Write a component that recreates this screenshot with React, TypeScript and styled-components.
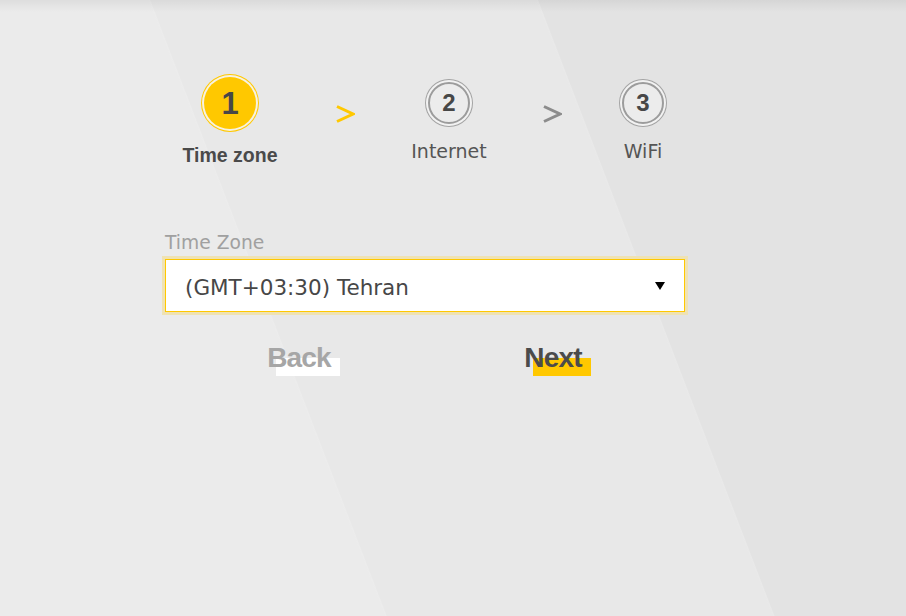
import React from 'react'
import styled, { createGlobalStyle } from 'styled-components'

const GlobalStyle = createGlobalStyle`
  html, body {
    margin: 0;
    padding: 0;
  }
  body {
    font-family: "DejaVu Sans", sans-serif;
    background: #e8e8e8;
  }
`

const YELLOW = '#ffc800'

const Page = styled.div`
  min-height: 100vh;
  box-sizing: border-box;
  padding: 73px 0 0 165px;
  background:
    linear-gradient(180deg, rgba(0, 0, 0, 0.06) 0px, rgba(0, 0, 0, 0) 12px),
    linear-gradient(69deg,
      #ebebeb 0px, #ebebeb 359px, #ececec 360.5px, #e8e8e8 361.5px,
      #e8e8e8 721px, #e9e9e9 722.5px, #e3e3e3 723.5px, #e3e3e3 100%);
`

const Panel = styled.div`
  width: 520px;
`

const Stepper = styled.div`
  display: grid;
  grid-template-columns: 130px 100px 108px 98px 84px;
  align-items: start;
`

const Step = styled.div`
  display: flex;
  flex-direction: column;
  align-items: center;
`

const BadgeSlot = styled.div`
  height: 60px;
  display: flex;
  align-items: center;
  justify-content: center;
`

const Badge = styled.div<{ $active?: boolean }>`
  box-sizing: border-box;
  border-radius: 50%;
  display: flex;
  align-items: center;
  justify-content: center;
  font-family: "Liberation Sans", Arial, sans-serif;
  font-weight: 700;
  line-height: 1;
  color: #474747;
  ${({ $active }) => $active ? `
    width: 52px;
    height: 52px;
    font-size: 31px;
    background: ${YELLOW};
    box-shadow: 0 0 0 2px #f7f2e2, 0 0 0 3px ${YELLOW};
  ` : `
    width: 42px;
    height: 42px;
    font-size: 24px;
    background: #ececec;
    border: 2px solid #9c9c9c;
    box-shadow: 0 0 0 2px #f2f2f2, 0 0 0 3px #a3a3a3;
  `}
`

const StepLabel = styled.div<{ $active?: boolean }>`
  white-space: nowrap;
  line-height: 24px;
  margin-top: ${({ $active }) => $active ? '10px' : '5.5px'};
  font-family: ${({ $active }) => $active ? '"Liberation Sans", Arial, sans-serif' : '"DejaVu Sans", sans-serif'};
  font-weight: ${({ $active }) => $active ? 700 : 400};
  font-size: ${({ $active }) => $active ? '19.5px' : '19px'};
  color: ${({ $active }) => $active ? '#4a4a4a' : '#555555'};
`

const Separator = styled.svg`
  justify-self: center;
  margin-top: 32px;
`

const Field = styled.div`
  margin-top: 65px;
`

const FieldLabel = styled.div`
  font-size: 18.7px;
  line-height: 22px;
  color: #a0a0a0;
  margin-bottom: 5px;
`

const SelectBox = styled.div`
  box-sizing: border-box;
  height: 53px;
  display: flex;
  align-items: center;
  justify-content: space-between;
  padding: 4px 19px 0 19px;
  background: #ffffff;
  border: 1px solid ${YELLOW};
  box-shadow: 0 0 0 3px #efe2b3;
`

const SelectValue = styled.span`
  font-size: 21.5px;
  color: #474747;
`

const Caret = styled.span`
  margin-top: -3px;
  width: 0;
  height: 0;
  border-left: 5.5px solid transparent;
  border-right: 5.5px solid transparent;
  border-top: 8px solid #000000;
`

const Actions = styled.div`
  display: grid;
  grid-template-columns: 1fr 1fr;
  margin-top: 32px;
`

const ActionButton = styled.button<{ $color: string; $underlay: string; $shift?: number }>`
  justify-self: center;
  position: relative;
  z-index: 0;
  margin: 0 0 0 ${({ $shift }) => $shift ?? 0}px;
  padding: 0;
  border: 0;
  background: transparent;
  cursor: pointer;
  font-family: "Liberation Sans", Arial, sans-serif;
  font-weight: 700;
  font-size: 28px;
  line-height: 28px;
  letter-spacing: -0.8px;
  color: ${({ $color }) => $color};

  &::before {
    content: '';
    position: absolute;
    left: 9px;
    right: -9px;
    top: 14px;
    bottom: -4px;
    background: ${({ $underlay }) => $underlay};
    z-index: -1;
  }
`

function Chevron({ color }: { color: string }) {
  return (
    <Separator width="19" height="18" viewBox="0 0 19 18">
      <polyline points="1,1.5 17,9 1,16.5" fill="none" stroke={color} strokeWidth="3" strokeLinejoin="miter" />
    </Separator>
  )
}

const steps = [
  { n: 1, label: 'Time zone' },
  { n: 2, label: 'Internet' },
  { n: 3, label: 'WiFi' },
]

export default function App() {
  const current = 1

  return (
    <>
      <GlobalStyle />
      <Page>
        <Panel>
          <Stepper>
            {steps.map((s, i) => (
              <React.Fragment key={s.n}>
                {i > 0 && <Chevron color={i === current ? YELLOW : '#8c8c8c'} />}
                <Step>
                  <BadgeSlot>
                    <Badge $active={s.n === current}>{s.n}</Badge>
                  </BadgeSlot>
                  <StepLabel $active={s.n === current}>{s.label}</StepLabel>
                </Step>
              </React.Fragment>
            ))}
          </Stepper>

          <Field>
            <FieldLabel>Time Zone</FieldLabel>
            <SelectBox>
              <SelectValue>(GMT+03:30) Tehran</SelectValue>
              <Caret />
            </SelectBox>
          </Field>

          <Actions>
            <ActionButton $color="#a6a6a6" $underlay="#ffffff" $shift={8}>Back</ActionButton>
            <ActionButton $color="#4b4b4b" $underlay={YELLOW} $shift={-4}>Next</ActionButton>
          </Actions>
        </Panel>
      </Page>
    </>
  )
}
